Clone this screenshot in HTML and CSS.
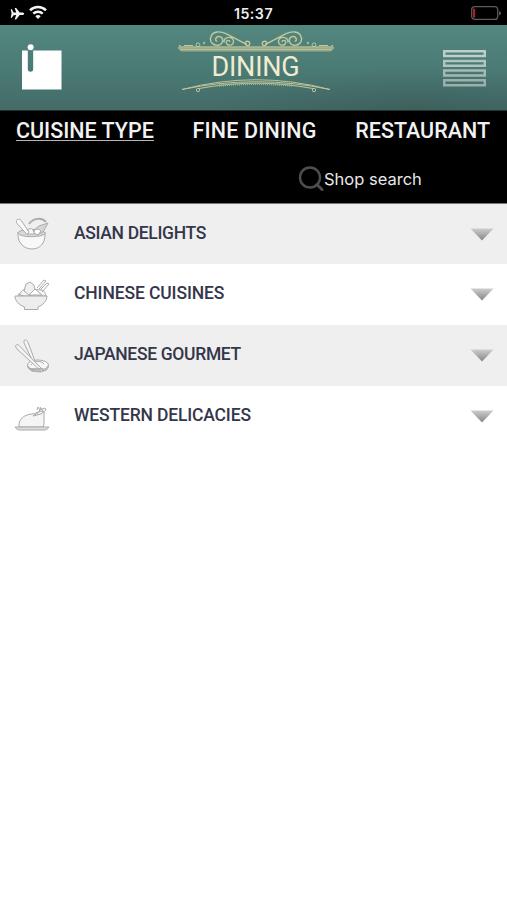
FILE: index.html
```html
<!DOCTYPE html>
<html lang="en">
<head>
    <meta charset="UTF-8">
    <meta name="viewport" content="width=device-width, initial-scale=1.0">
    <title>Dining</title>
    <link rel="stylesheet" href="styles.css">
</head>
<body>
    <div class="status-bar">
        <svg class="status-left" width="50" height="25" viewBox="0 0 50 25" fill="#f4f4f4">
            <path d="M10.7 9.2h1.2l1.7 3.2 2.6.2-1.5-4.5h1.500l3.500 4.500h3c2 .4 2 2 0 2.400h-3l-3.500 4.400h-1.500l1.500-4.300-2.600.2-1.700 2.400h-1.200l.9-4.200z"/>
            <path d="M38 18.900l-2.700-2.700a4 4 0 0 1 5.400 0z"/>
            <path d="M33.300 13.600a6.800 6.800 0 0 1 9.400 0M30 10.300a11.500 11.500 0 0 1 16 0" fill="none" stroke="#f4f4f4" stroke-width="2.500"/>
        </svg>
        <span class="clock">15:37</span>
        <svg class="status-right" width="36" height="25" viewBox="0 0 36 25">
            <rect x="0.7" y="6.600" width="26" height="12.800" rx="3" fill="none" stroke="#5b5b5b" stroke-width="1.300"/>
            <path d="M2 8.600h2.200v9H2z" fill="#a7202c"/>
            <path d="M28 11v4.500q2-.8 2-2.300t-2-2.200z" fill="#5b5b5b"/>
        </svg>
    </div>

    <header class="header">
        <svg class="logo" width="40" height="46" viewBox="0 0 40 46">
            <path fill="#fff" d="M0 6.500h5.800V25a2.700 2.700 0 0 0 5.400 0V6.500h28.300V45.500H0z"/>
            <circle cx="8.600" cy="3.300" r="3" fill="#fff"/>
        </svg>

        <div class="title">
            <svg class="ornament-top" width="158" height="22" viewBox="0 0 158 22" fill="none" stroke="#c5c79c">
                <path d="M1 15.600h156v2l-3 3H4l-3-3z" fill="#98ab8b" stroke="none"/>
                <path d="M2 15.900h154M3 18.400h152" stroke-width=".8"/>
                <g id="scroll">
                    <path stroke-width="1.400" d="M70 13.600L49 2.600C43-.2 36 .2 34 5.500c-2 5 2 9.200 7 8.800 5-.5 6.500-7 2-8.600-4-1.200-6 4-2.700 4.700M47 11.500c0-7 10-6.500 9.500-.8-.4 4.600-7.500 4.300-7.200.4.200-2.400 3.600-2.300 3.500-.1M70 14.600c-3-1-2-4.600.8-4.300 3 .6 2.400 5-.8 4.300"/>
                    <circle cx="21" cy="13.800" r="1.900"/>
                    <circle cx="27" cy="12" r=".8"/>
                    <path d="M2 14.500h1.500M16 14.500h-9" stroke-width="1.200"/>
                </g>
                <use href="#scroll" transform="matrix(-1 0 0 1 158 0)"/>
            </svg>
            <h1>DINING</h1>
            <svg class="ornament-bottom" width="150" height="15" viewBox="0 0 150 15" fill="none" stroke="#bec39b">
                <path d="M1 10.500Q75-9 149 10.500M1 10.500Q75-5 149 10.500" stroke-width="1"/>
                <path d="M18 9.500Q75-1 132 9.500" stroke-width="1.200"/>
                <path d="M38 6.500Q75 3 112 6.500" stroke-width="2.600" stroke="#a1b190" stroke-dasharray="1 1"/>
                <circle cx="17" cy="11" r="1.700"/>
                <circle cx="133" cy="11" r="1.700"/>
            </svg>
        </div>

        <svg class="menu" width="43" height="37" viewBox="0 0 43 37" fill="none" stroke-width="2.500">
            <path stroke="#bdcecb" d="M1.200 1.200h40.600v4.900H1.200z"/>
            <path stroke="#b2c4c1" d="M1.200 10.900h40.600v4.900H1.200z"/>
            <path stroke="#a5b9b6" d="M1.200 20.600h40.600v4.900H1.200z"/>
            <path stroke="#9bafab" d="M1.200 30.300h40.600v4.900H1.200z"/>
        </svg>
    </header>

    <nav class="tabs">
        <a class="tab active">CUISINE TYPE</a>
        <a class="tab tab-fine">FINE DINING</a>
        <a class="tab">RESTAURANT</a>
    </nav>

    <div class="search">
        <svg width="26" height="26" viewBox="0 0 26 26" fill="none" stroke="#4e4e4e" stroke-width="2.400">
            <circle cx="12" cy="11.500" r="10"/>
            <path d="M19 18.500l5 5" stroke-width="3" stroke-linecap="round"/>
        </svg>
        <span>Shop search</span>
    </div>

    <ul class="list">
        <li class="row">
            <svg class="icon" width="40" height="38" viewBox="0 0 40 38">
                <path d="M17 9c4-6 13-7 17-2" stroke-width="2"/>
                <path d="M6 17v3c0 8 6 14 14 14s13-6 13-14v-3" fill="#f8f8f8"/>
                <ellipse cx="19.500" cy="18" rx="13.500" ry="3.700" fill="#d8d8d8"/>
                <path d="M15 19c0-5 4-7 6-4l2 4z" fill="#fafafa"/>
                <path d="M4.500 5.500c1-2 4-1.500 5 .5L17 17l-2 2.500L6 9.500C4.500 8 4 7 4.500 5.500z" fill="#fafafa"/>
                <path d="M21 16l6-5 9-3-5 9-6 3z" fill="#d6d6d6"/>
                <path d="M22 18c0-4 4-5 7-2l-3 4z" fill="#fff"/>
            </svg>
            <span class="name name-asian">ASIAN DELIGHTS</span>
            <svg class="arrow" width="24" height="13" viewBox="0 0 24 13">
                <defs>
                    <linearGradient id="fade" x2="0" y2="1">
                        <stop offset="0" stop-color="#cecece"/>
                        <stop offset="1" stop-color="#858585"/>
                    </linearGradient>
                </defs>
                <path d="M.500.500h23l-11.500 12z" fill="url(#fade)"/>
            </svg>
        </li>
        <li class="row">
            <svg class="icon" width="40" height="38" viewBox="0 0 40 38">
                <path d="M6 20l3-4c1-2 4-3 7-3l13 1c3 0 4 2 5 6z" fill="#f8f8f8"/>
                <path d="M14 8l4-2 4 3 1 6-5 5-6-5z" fill="#f0f0f0"/>
                <path d="M17 19l6-6 7 6z" fill="#fff"/>
                <path d="M25 12l7-8 2 1-7 8M28 14l7-7 2 1-7 8M6 18l6 2"/>
                <path d="M3 20h32c0 5-4 9-9 11v2.500H12.500V31C7 29 3 25 3 20z" fill="#ededed"/>
            </svg>
            <span class="name name-chinese">CHINESE CUISINES</span>
            <svg class="arrow" width="24" height="13" viewBox="0 0 24 13"><path d="M.500.500h23l-11.500 12z" fill="url(#fade)"/></svg>
        </li>
        <li class="row">
            <svg class="icon" width="40" height="38" viewBox="0 0 40 38">
                <ellipse cx="26" cy="28" rx="10.500" ry="5" fill="#f6f6f6"/>
                <path d="M15.500 29c0 7 21 7 21 0l-2 4-6 2-9-1z" fill="#ddd"/>
                <path d="M19 28c3-4 10-5 13-1"/>
                <path d="M12 3.500c2-1.500 3.500 0 4 2L23 24l-2 1L12 6z" fill="#f4f4f4"/>
                <path d="M3.500 9.500c0-2 2-2.500 3.500-1L31 33l-1.500 1.500L5 12z" fill="#f4f4f4"/>
                <path d="M18 32h13" stroke-width="1.600"/>
            </svg>
            <span class="name name-japanese">JAPANESE GOURMET</span>
            <svg class="arrow" width="24" height="13" viewBox="0 0 24 13"><path d="M.500.500h23l-11.500 12z" fill="url(#fade)"/></svg>
        </li>
        <li class="row">
            <svg class="icon" width="40" height="38" viewBox="0 0 40 38">
                <path d="M7 29c-1-8 6-13 14-13l8-3 3 1v12l-1 3z" fill="#f5f5f5"/>
                <path d="M21 18l5-3 3-5M25 12l1-3 2 3 5-2 1 2-5 4-8 2M28 9l3 4"/>
                <path d="M3 29h34c-1 2-3 3-5 3H8c-2 0-4-1-5-3z" fill="#ddd"/>
            </svg>
            <span class="name name-western">WESTERN DELICACIES</span>
            <svg class="arrow" width="24" height="13" viewBox="0 0 24 13"><path d="M.500.500h23l-11.500 12z" fill="url(#fade)"/></svg>
        </li>
    </ul>
</body>
</html>
```
FILE: styles.css
```css
* {
    box-sizing: border-box;
}
body {
    margin: 0;
    background: #fff;
    font-family: Roboto, "Liberation Sans", sans-serif;
}
svg {
    display: block;
}
.status-bar {
    display: grid;
    grid-template-columns: 1fr auto 1fr;
    align-items: center;
    height: 25px;
    background: #000;
}
.status-right {
    justify-self: end;
}
.clock {
    padding-top: 3px;
    color: #eee;
    font: 600 14.2px/20px Inter, sans-serif;
    letter-spacing: 0.5px;
}
.header {
    display: grid;
    grid-template-columns: 1fr auto 1fr;
    align-items: start;
    height: 86px;
    padding: 0 21px 0 22px;
    border-bottom: 1px solid #1d3330;
    background:
        radial-gradient(ellipse at 82% 100%, rgba(50, 70, 70, 0.3), transparent 35%),
        linear-gradient(#52877f, #4b7b75 50%, #436b67);
}
.logo {
    margin-top: 19px;
}
.title {
    display: flex;
    flex-direction: column;
    align-items: center;
    padding: 6px 0 0 3px;
}
.title h1 {
    margin: 0;
    padding-top: 2px;
    color: #f1ebcf;
    font-size: 27px;
    font-weight: 400;
    line-height: 24px;
    letter-spacing: -0.2px;
}
.menu {
    justify-self: end;
    margin-top: 25px;
}
.tabs {
    display: flex;
    justify-content: space-between;
    height: 45px;
    padding: 8px 17px 0 16px;
    background: #000;
}
.tab {
    height: 22px;
    color: #f2f2f2;
    font-size: 21.5px;
    font-weight: 500;
    line-height: 23px;
    white-space: nowrap;
}
.tab.active {
    border-bottom: 1px solid #b5b5b5;
}
.tab-fine {
    letter-spacing: 0.2px;
}
.search {
    display: flex;
    align-items: flex-start;
    height: 48px;
    padding: 10px 0 0 298px;
    border-bottom: 1px solid #777476;
    background: #000;
    color: #e8e8e8;
    font: 16.5px/26px Inter, sans-serif;
}
.list {
    margin: 0;
    padding: 0;
    list-style: none;
}
.row {
    display: flex;
    align-items: center;
    height: 61px;
    padding: 0 13px 0 12px;
    background: #fff;
}
.row:first-child {
    height: 60px;
}
.row:nth-child(odd) {
    background: #efefef;
}
.icon {
    fill: none;
    stroke: #aaa;
    stroke-width: 1;
    stroke-linejoin: round;
}
.name {
    flex: 1;
    padding: 0 0 3px 22px;
    color: #34364a;
    font-size: 17.5px;
    font-weight: 500;
    white-space: nowrap;
}
.name-asian {
    letter-spacing: -0.33px;
}
.name-chinese {
    letter-spacing: -0.12px;
}
.name-japanese {
    letter-spacing: -0.33px;
}
.name-western {
    letter-spacing: -0.16px;
}
```
